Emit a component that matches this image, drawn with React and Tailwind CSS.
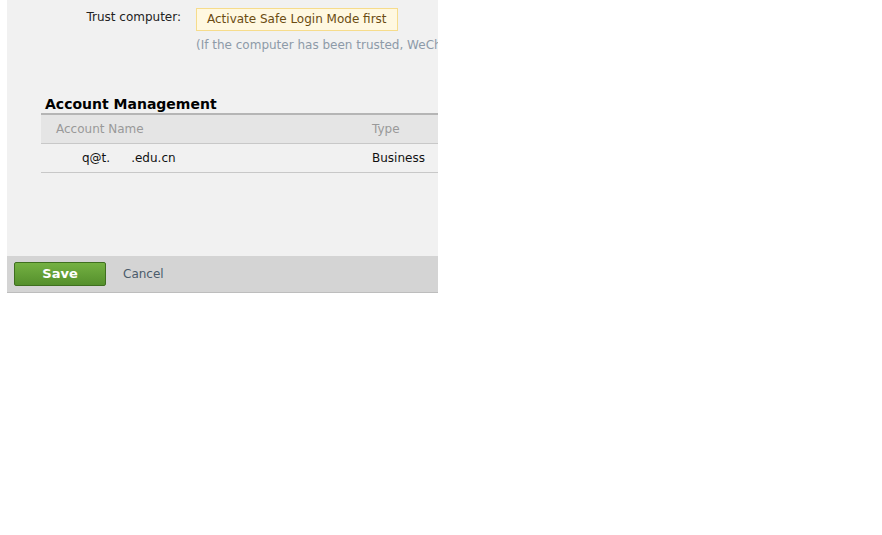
import React from "react";

const font = { fontFamily: '"DejaVu Sans", Tahoma, sans-serif' };

export default function App() {
  return (
    <div className="min-h-[535px] bg-white" style={font}>
      <div className="ml-[7px] w-[431px] overflow-hidden bg-[#f1f1f1]">
        <div className="w-[700px]">
          {/* trust computer row */}
          <div className="flex items-start pt-[6px]">
            <div className="w-[174px] text-right text-[12px] leading-[23px] text-[#222]">
              Trust computer:
            </div>
            <div className="ml-[15px]">
              <div className="inline-block h-[23px] border border-[#f6dc8c] bg-[#fff8e1] px-[10px] text-[12px] leading-[21px] text-[#6b4c12]">
                Activate Safe Login Mode first
              </div>
              <div className="mt-[7px] whitespace-nowrap text-[12px] leading-[15px] text-[#8d9aa8]">
                (If the computer has been trusted, WeChat Work will not verify it again)
              </div>
            </div>
          </div>

          {/* account management */}
          <div className="mt-[43px] pl-[38px] text-[14px] font-bold leading-[17px] text-black">
            Account Management
          </div>
          <div className="ml-[34px]">
            <div className="flex h-[31px] items-center border-t-2 border-b border-t-[#b5b5b5] border-b-[#c8c8c8] bg-[#e5e5e5] text-[12px] text-[#999]">
              <div className="w-[331px] pl-[15px]">Account Name</div>
              <div>Type</div>
            </div>
            <div className="flex h-[29px] items-center border-b border-[#c8c8c8] text-[12px] text-[#111]">
              <div className="w-[331px] pl-[41px]">
                q@t.<span className="inline-block w-[21px]"></span>.edu.cn
              </div>
              <div>Business</div>
            </div>
          </div>

          <div className="h-[83px]"></div>

          {/* footer */}
          <div className="flex h-[37px] items-center border-b border-[#bdbdbd] bg-[#d4d4d4] pl-[7px]">
            <button className="h-[24px] w-[92px] rounded-[2px] border border-[#3f6f1f] bg-gradient-to-b from-[#74b142] to-[#55902c] text-[13px] font-bold text-white">
              Save
            </button>
            <span className="ml-[17px] text-[12px] text-[#4b5b6b]">Cancel</span>
          </div>
        </div>
      </div>
    </div>
  );
}
